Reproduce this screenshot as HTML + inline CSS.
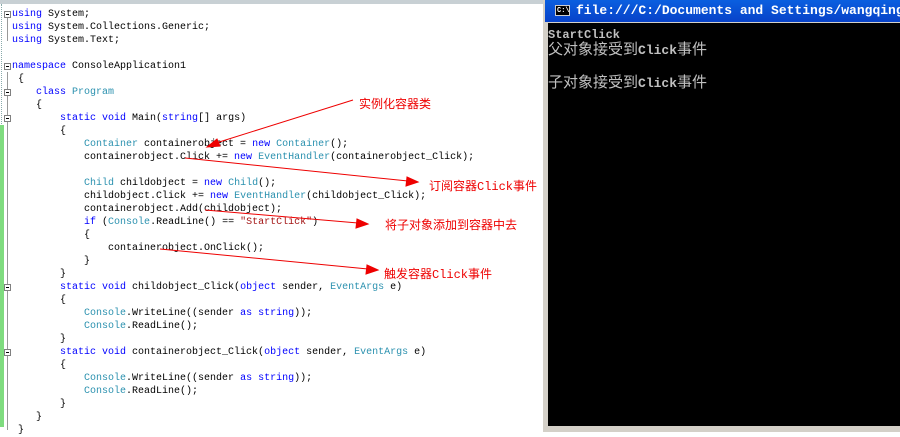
<!DOCTYPE html>
<html><head><meta charset="utf-8"><style>
*{margin:0;padding:0}
body{width:900px;height:432px;overflow:hidden;background:#fff;position:relative;font-family:"Liberation Mono","Noto Sans CJK SC",monospace}
#ed{position:absolute;left:0;top:0;width:543px;height:432px;background:#fff;border-top:4px solid #c8d0d4;box-sizing:border-box}
.l{position:absolute;left:12px;font-size:10px;line-height:13px;height:13px;white-space:pre;color:#000}
.k{color:#0000ff}.t{color:#2b91af}.s{color:#a31515}
.box{position:absolute;left:4px;width:7px;height:7px;border:1px solid #808080;box-sizing:border-box;background:#fff}
.box:after{content:"";position:absolute;left:1px;top:2px;width:3px;height:1px;background:#000}
.ann{position:absolute;color:#e00;font-size:12px;font-family:"Liberation Mono","Noto Sans CJK SC",monospace;white-space:nowrap;line-height:14px}
#con{position:absolute;left:543px;top:0;width:357px;height:432px;background:#d4d0c8}
#title{position:absolute;left:2px;top:0;right:0;height:22px;background:linear-gradient(#0a5fe0,#0842c8);color:#fff;font-weight:bold;font-size:13px;line-height:22px;padding-left:31px;white-space:nowrap;overflow:hidden}
#ic{position:absolute;left:10px;top:5px;width:15px;height:11px;background:#000;border:1px solid #ccc;color:#fff;font-size:7px;line-height:11px;padding-left:1px;box-sizing:border-box}
#blk{position:absolute;left:5px;top:23px;right:0;height:403px;background:#000;color:#c0c0c0}
#blk div{position:absolute;left:0;white-space:nowrap;font-size:15px}
</style></head><body>
<div id="ed">
<div style="position:absolute;left:1px;top:0;width:1px;height:120px;border-left:1px dotted #8aa"></div>
<div style="position:absolute;left:0;top:121px;width:4px;height:302px;background:#7fdc7f"></div>
<div style="position:absolute;left:7px;top:13px;width:1px;height:24px;background:#999"></div>
<div style="position:absolute;left:7px;top:68px;width:1px;height:358px;background:#999"></div>
<div class="box" style="top:7px"></div>
<div class="box" style="top:59px"></div>
<div class="box" style="top:85px"></div>
<div class="box" style="top:111px"></div>
<div class="box" style="top:280px"></div>
<div class="box" style="top:345px"></div>
</div>
<div class="l" style="top:8px"><span class="k">using</span> System;</div>
<div class="l" style="top:21px"><span class="k">using</span> System.Collections.Generic;</div>
<div class="l" style="top:34px"><span class="k">using</span> System.Text;</div>
<div class="l" style="top:60px"><span class="k">namespace</span> ConsoleApplication1</div>
<div class="l" style="top:73px"> {</div>
<div class="l" style="top:86px">    <span class="k">class</span> <span class="t">Program</span></div>
<div class="l" style="top:99px">    {</div>
<div class="l" style="top:112px">        <span class="k">static void</span> Main(<span class="k">string</span>[] args)</div>
<div class="l" style="top:125px">        {</div>
<div class="l" style="top:138px">            <span class="t">Container</span> containerobject = <span class="k">new</span> <span class="t">Container</span>();</div>
<div class="l" style="top:151px">            containerobject.Click += <span class="k">new</span> <span class="t">EventHandler</span>(containerobject_Click);</div>
<div class="l" style="top:177px">            <span class="t">Child</span> childobject = <span class="k">new</span> <span class="t">Child</span>();</div>
<div class="l" style="top:190px">            childobject.Click += <span class="k">new</span> <span class="t">EventHandler</span>(childobject_Click);</div>
<div class="l" style="top:203px">            containerobject.Add(childobject);</div>
<div class="l" style="top:216px">            <span class="k">if</span> (<span class="t">Console</span>.ReadLine() == <span class="s">"StartClick"</span>)</div>
<div class="l" style="top:229px">            {</div>
<div class="l" style="top:242px">                containerobject.OnClick();</div>
<div class="l" style="top:255px">            }</div>
<div class="l" style="top:268px">        }</div>
<div class="l" style="top:281px">        <span class="k">static void</span> childobject_Click(<span class="k">object</span> sender, <span class="t">EventArgs</span> e)</div>
<div class="l" style="top:294px">        {</div>
<div class="l" style="top:307px">            <span class="t">Console</span>.WriteLine((sender <span class="k">as string</span>));</div>
<div class="l" style="top:320px">            <span class="t">Console</span>.ReadLine();</div>
<div class="l" style="top:333px">        }</div>
<div class="l" style="top:346px">        <span class="k">static void</span> containerobject_Click(<span class="k">object</span> sender, <span class="t">EventArgs</span> e)</div>
<div class="l" style="top:359px">        {</div>
<div class="l" style="top:372px">            <span class="t">Console</span>.WriteLine((sender <span class="k">as string</span>));</div>
<div class="l" style="top:385px">            <span class="t">Console</span>.ReadLine();</div>
<div class="l" style="top:398px">        }</div>
<div class="l" style="top:411px">    }</div>
<div class="l" style="top:424px"> }</div>
<svg style="position:absolute;left:0;top:0" width="543" height="432">
<g stroke="#e00" stroke-width="1" fill="#e00">
<line x1="353" y1="100" x2="216" y2="143"/><polygon points="207,147 217,139 220,146"/>
<line x1="185" y1="158" x2="408" y2="181"/><polygon points="418,182 407,177 406,186"/>
<line x1="205" y1="210" x2="358" y2="223"/><polygon points="368,224 357,219 356,228"/>
<line x1="160" y1="249" x2="368" y2="269"/><polygon points="378,270 367,265 366,274"/>
</g></svg>
<div class="ann" style="left:359px;top:98px">实例化容器类</div>
<div class="ann" style="left:429px;top:180px">订阅容器Click事件</div>
<div class="ann" style="left:385px;top:219px">将子对象添加到容器中去</div>
<div class="ann" style="left:384px;top:268px">触发容器Click事件</div>
<div id="con">
<div id="title"><div id="ic">C:\</div>file:///C:/Documents and Settings/wangqing</div>
<div id="blk">
<div style="top:5px;font-size:12px;font-weight:bold;line-height:14px">StartClick</div>
<div style="top:19px;line-height:17px">父对象接受到<b style="font-family:'Liberation Mono';font-size:13px">Click</b>事件</div>
<div style="top:52px;line-height:17px">子对象接受到<b style="font-family:'Liberation Mono';font-size:13px">Click</b>事件</div>
</div>
</div>
</body></html>
